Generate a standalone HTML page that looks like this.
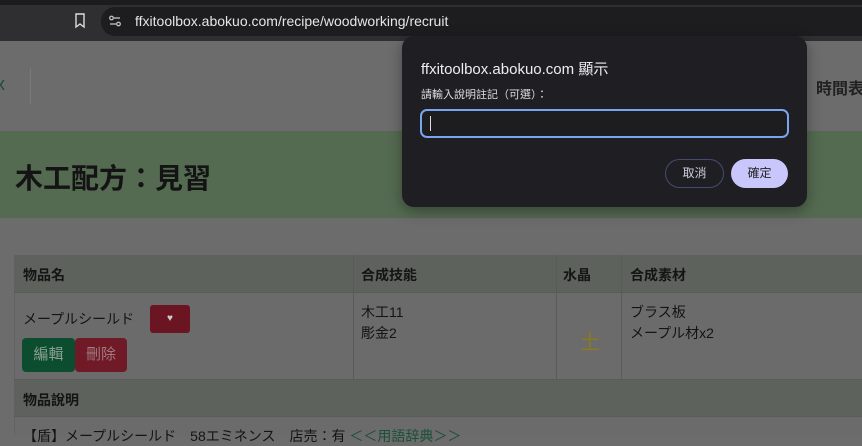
<!DOCTYPE html><html><head><meta charset="utf-8"><style>
*{margin:0;padding:0;box-sizing:border-box}
body{width:862px;height:434px;overflow:hidden;background:#6c6c6c;font-family:"Liberation Sans","Noto Sans CJK TC",sans-serif;position:relative;color:#141414}
.abs{position:absolute;white-space:nowrap}
</style></head><body>
<div class="abs" style="left:0;top:0;width:862px;height:5px;background:#1c1c1e"></div>
<div class="abs" style="left:0;top:5px;width:862px;height:36px;background:#2f2f31"></div>
<div class="abs" style="left:101px;top:7px;width:761px;height:29px;background:#1d1d1f;border-radius:14px 0 0 14px"></div>
<svg class="abs" style="left:74px;top:13px" width="12" height="16" viewBox="0 0 12 16"><path d="M2 1h8v13l-4-3-4 3z" fill="none" stroke="#ddd" stroke-width="1.4"/></svg>
<svg class="abs" style="left:108px;top:14px" width="14" height="14" viewBox="0 0 14 14" fill="none" stroke="#ccc" stroke-width="1.2"><circle cx="3.5" cy="4" r="1.8"/><path d="M6 4h6M2 10h6"/><circle cx="10.5" cy="10" r="1.8"/></svg>
<div class="abs" style="left:135px;top:13px;font-size:14px;color:#e6e6e6">ffxitoolbox.abokuo.com/recipe/woodworking/recruit</div>
<div class="abs" style="left:0;top:41px;width:862px;height:90px;background:#6c6c6c"></div>
<div class="abs" style="left:-4px;top:74px;font-size:18px;color:#1a4f3a">x</div>
<div class="abs" style="left:30px;top:68px;width:1px;height:36px;background:#7a7a7a"></div>
<div class="abs" style="left:816px;top:75px;font-size:16px;font-weight:bold;color:#222">時間表</div>
<div class="abs" style="left:0;top:131px;width:862px;height:87px;background:#546a51"></div>
<div class="abs" style="left:15px;top:157px;font-size:28px;font-weight:bold;color:#141414">木工配方：見習</div>
<div class="abs" style="left:14px;top:255px;width:848px;height:180px;background:#6b6b6b;border-left:1px solid #626262"></div>
<div class="abs" style="left:14px;top:255px;width:848px;height:37px;background:#5d635c"></div>
<div class="abs" style="left:14px;top:379px;width:848px;height:37px;background:#5d635c"></div>
<div class="abs" style="left:14px;top:292px;width:848px;height:1px;background:#5a5a5a"></div>
<div class="abs" style="left:14px;top:379px;width:848px;height:1px;background:#5a5a5a"></div>
<div class="abs" style="left:14px;top:416px;width:848px;height:1px;background:#5a5a5a"></div>
<div class="abs" style="left:353px;top:255px;width:1px;height:124px;background:#5a5a5a"></div>
<div class="abs" style="left:556px;top:255px;width:1px;height:124px;background:#5a5a5a"></div>
<div class="abs" style="left:621px;top:255px;width:1px;height:124px;background:#5a5a5a"></div>
<div class="abs" style="left:23px;top:265px;font-size:14px;font-weight:bold">物品名</div>
<div class="abs" style="left:361px;top:265px;font-size:14px;font-weight:bold">合成技能</div>
<div class="abs" style="left:563px;top:265px;font-size:14px;font-weight:bold">水晶</div>
<div class="abs" style="left:630px;top:265px;font-size:14px;font-weight:bold">合成素材</div>
<div class="abs" style="left:23px;top:309px;font-size:14px">メープルシールド</div>
<div class="abs" style="left:150px;top:305px;width:40px;height:28px;background:#6b1522;border-radius:3px;color:#ccc;font-size:10px;text-align:center;line-height:28px">♥</div>
<div class="abs" style="left:22px;top:338px;width:53px;height:34px;background:#0d4d2f;border-radius:4px;color:#8a9f92;font-size:15px;text-align:center;line-height:34px">編輯</div>
<div class="abs" style="left:75px;top:338px;width:52px;height:34px;background:#6f1a26;border-radius:4px;color:#a07a80;font-size:15px;text-align:center;line-height:34px">刪除</div>
<div class="abs" style="left:361px;top:302px;font-size:14px;line-height:21px">木工11<br>彫金2</div>
<div class="abs" style="left:580px;top:326px;font-size:20px;color:#8a7a20">土</div>
<div class="abs" style="left:630px;top:302px;font-size:14px;line-height:21px">ブラス板<br>メープル材x2</div>
<div class="abs" style="left:23px;top:390px;font-size:14px;font-weight:bold">物品說明</div>
<div class="abs" style="left:23px;top:426px;font-size:14px">【盾】メープルシールド　58エミネンス　店売：有 <span style="color:#1a4f3a">＜＜用語辞典＞＞</span></div>
<div class="abs" style="left:402px;top:36px;width:405px;height:171px;background:#1f1f23;border-radius:12px;box-shadow:0 4px 14px rgba(0,0,0,.35)"></div>
<div class="abs" style="left:421px;top:58px;font-size:15px;color:#eee">ffxitoolbox.abokuo.com 顯示</div>
<div class="abs" style="left:421px;top:86px;font-size:11px;color:#ddd">請輸入說明註記（可選）：</div>
<div class="abs" style="left:420px;top:109px;width:369px;height:29px;border:2px solid #7aa4f0;border-radius:7px;background:#1d1d20"></div>
<div class="abs" style="left:430px;top:116px;width:1px;height:15px;background:#ddd"></div>
<div class="abs" style="left:665px;top:159px;width:59px;height:29px;border:1px solid #444a70;border-radius:15px;color:#ccd;font-size:12px;text-align:center;line-height:27px">取消</div>
<div class="abs" style="left:731px;top:159px;width:57px;height:29px;background:#c9c6fb;border-radius:15px;color:#222;font-size:12px;text-align:center;line-height:29px">確定</div>
</body></html>
